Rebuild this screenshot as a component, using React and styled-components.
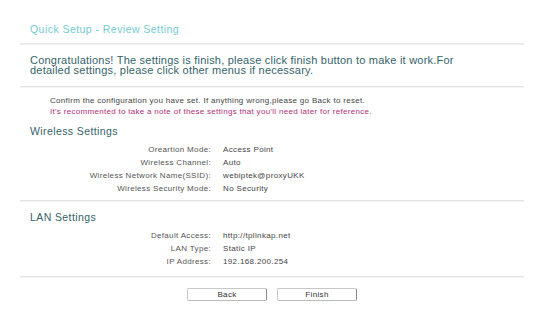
import React from "react";
import styled, { createGlobalStyle } from "styled-components";

const Global = createGlobalStyle`
  html, body { margin: 0; padding: 0; background: #fff; }
  body { font-family: "Liberation Sans", Arial, sans-serif; }
`;

const Page = styled.div`
  width: 504px;
  margin: 0 20px;
  padding-top: 22px;
`;

const Title = styled.div`
  padding-left: 10px;
  font-size: 10.5px;
  letter-spacing: 0.45px;
  line-height: 14px;
  color: #72cbd2;
  height: 21px;
`;

const Divider = styled.div`
  height: 1px;
  background: #e4e4e4;
  box-shadow: 0 1px 0 #f3f3f3;
`;

const Congrats = styled.div`
  padding: 11px 10px 11px;
  font-size: 11px;
  letter-spacing: 0.22px;
  line-height: 10px;
  color: #35636a;
`;

const Notes = styled.div`
  padding: 8px 0 0 30px;
  font-size: 8px;
  letter-spacing: 0.3px;
  line-height: 11px;
  color: #444;
`;

const Warn = styled.span`
  color: #b0307a;
`;

const Section = styled.div`
  padding: ${(p) => p.$pad};
`;

const SectionTitle = styled.div`
  padding-left: 10px;
  font-size: 10.5px;
  letter-spacing: 0.4px;
  line-height: 14px;
  color: #35636a;
`;

const Rows = styled.div`
  display: grid;
  grid-template-columns: 191px 1fr;
  column-gap: 12px;
  margin-top: ${(p) => p.$mt}px;
`;

const Label = styled.div`
  text-align: right;
  font-size: 8px;
  letter-spacing: 0.33px;
  line-height: 13px;
  color: #555;
`;

const Value = styled.div`
  font-size: 8px;
  letter-spacing: 0.35px;
  line-height: 13px;
  color: #444;
`;

const Buttons = styled.div`
  display: flex;
  justify-content: center;
  gap: 10px;
  padding-top: 11px;
`;

const Button = styled.button`
  width: 80px;
  height: 13px;
  padding: 0;
  background: #fff;
  border: 1px solid #c8c8c8;
  border-right-color: #888;
  border-bottom-color: #bbb;
  border-radius: 2px;
  font-family: "Liberation Sans", Arial, sans-serif;
  font-size: 8px;
  letter-spacing: 0.35px;
  line-height: 11px;
  color: #333;
`;

const wireless = [
  ["Oreartion Mode:", "Access Point"],
  ["Wireless Channel:", "Auto"],
  ["Wireless Network Name(SSID):", "webiptek@proxyUKK"],
  ["Wireless Security Mode:", "No Security"],
];

const lan = [
  ["Default Access:", "http://tplinkap.net"],
  ["LAN Type:", "Static IP"],
  ["IP Address:", "192.168.200.254"],
];

function RowList({ items, mt }) {
  return (
    <Rows $mt={mt}>
      {items.map(([l, v]) => (
        <React.Fragment key={l}>
          <Label>{l}</Label>
          <Value>{v}</Value>
        </React.Fragment>
      ))}
    </Rows>
  );
}

export default function App() {
  return (
    <>
      <Global />
      <Page>
        <Title>Quick Setup - Review Setting</Title>
        <Divider />
        <Congrats>
          Congratulations! The settings is finish, please click finish button to make it work.For
          <br />
          detailed settings, please click other menus if necessary.
        </Congrats>
        <Divider />
        <Notes>
          Confirm the configuration you have set. If anything wrong,please go Back to reset.
          <br />
          <Warn>
            It's recommented to take a note of these settings that you'll need later for reference.
          </Warn>
        </Notes>
        <Section $pad="7px 0 5px">
          <SectionTitle>Wireless Settings</SectionTitle>
          <RowList items={wireless} mt={5} />
        </Section>
        <Divider />
        <Section $pad="9px 0 8px">
          <SectionTitle>LAN Settings</SectionTitle>
          <RowList items={lan} mt={5} />
        </Section>
        <Divider />
        <Buttons>
          <Button>Back</Button>
          <Button>Finish</Button>
        </Buttons>
      </Page>
    </>
  );
}
